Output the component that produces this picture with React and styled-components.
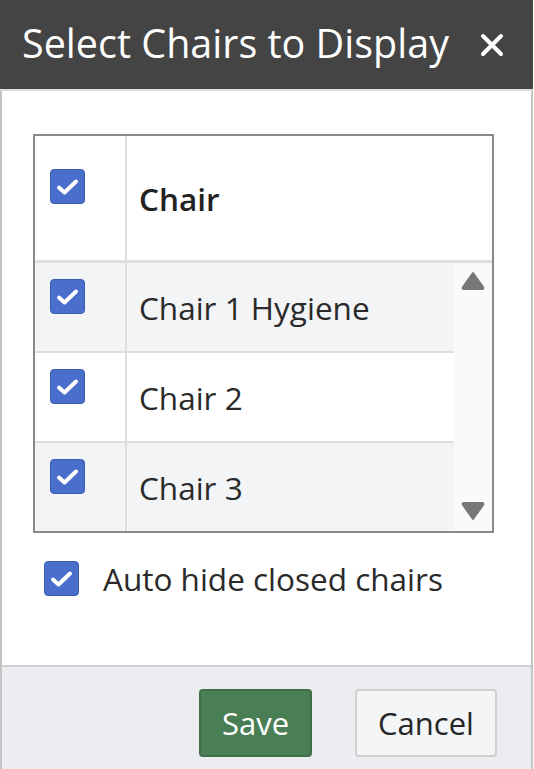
import React, { useState } from "react";
import styled, { createGlobalStyle } from "styled-components";

const GlobalStyle = createGlobalStyle`
  html, body {
    margin: 0;
    padding: 0;
    background: #ffffff;
  }
  body {
    font-family: "Open Sans", "Noto Sans", sans-serif;
    color: #262626;
  }
`;

const chairs = ["Chair 1 Hygiene", "Chair 2", "Chair 3"];

const Check = ({ checked }) => (
  <Box $checked={checked}>
    {checked && (
      <svg width="35" height="35" viewBox="0 0 35 35">
        <path
          d="M9 18.5 L14.5 23.5 L26 12.5"
          fill="none"
          stroke="#fff"
          strokeWidth="4"
          strokeLinecap="round"
          strokeLinejoin="round"
        />
      </svg>
    )}
  </Box>
);

const App = () => {
  const [checked, setChecked] = useState([true, true, true]);
  const [autoHide, setAutoHide] = useState(true);
  const all = checked.every(Boolean);

  const toggle = (i) =>
    setChecked((c) => c.map((v, j) => (j === i ? !v : v)));

  return (
    <>
      <GlobalStyle />
      <Dialog>
        <Header>
          <Title>Select Chairs to Display</Title>
          <Close aria-label="close">
            <svg width="24" height="24" viewBox="0 0 24 24">
              <path
                d="M3 3 L21 21 M21 3 L3 21"
                stroke="#fff"
                strokeWidth="4"
                strokeLinecap="round"
              />
            </svg>
          </Close>
        </Header>

        <Body>
          <Table>
            <HeadRow>
              <CheckCell
                $head
                onClick={() => setChecked(chairs.map(() => !all))}
              >
                <Check checked={all} />
              </CheckCell>
              <HeadLabel>Chair</HeadLabel>
            </HeadRow>
            <Scroller>
              <Rows>
                {chairs.map((name, i) => (
                  <Row key={name} $odd={i % 2 === 0} onClick={() => toggle(i)}>
                    <CheckCell>
                      <Check checked={checked[i]} />
                    </CheckCell>
                    <Label>{name}</Label>
                  </Row>
                ))}
              </Rows>
              <ScrollBar>
                <svg width="26" height="20" viewBox="0 0 26 20">
                  <path
                    d="M13 2 L23 16 Q24 18 22 18 L4 18 Q2 18 3 16 Z"
                    fill="#777"
                    stroke="#777"
                    strokeWidth="2"
                    strokeLinejoin="round"
                  />
                </svg>
                <svg width="26" height="20" viewBox="0 0 26 20">
                  <path
                    d="M13 18 L23 4 Q24 2 22 2 L4 2 Q2 2 3 4 Z"
                    fill="#777"
                    stroke="#777"
                    strokeWidth="2"
                    strokeLinejoin="round"
                  />
                </svg>
              </ScrollBar>
            </Scroller>
          </Table>

          <AutoHide onClick={() => setAutoHide(!autoHide)}>
            <Check checked={autoHide} />
            <span>Auto hide closed chairs</span>
          </AutoHide>
        </Body>

        <Footer>
          <Button $primary>Save</Button>
          <Button>Cancel</Button>
        </Footer>
      </Dialog>
    </>
  );
};

const Dialog = styled.div`
  width: 533px;
  height: 100vh;
  box-sizing: border-box;
  border-left: 2px solid #c4c4c4;
  border-right: 2px solid #c4c4c4;
  display: flex;
  flex-direction: column;
  background: #fff;
`;

const Header = styled.div`
  height: 89px;
  background: #444444;
  border-bottom: 2px solid #dcdcdc;
  margin: 0 -2px;
  padding: 0 29px 0 22px;
  display: flex;
  align-items: center;
  justify-content: space-between;
  flex-shrink: 0;
`;

const Title = styled.h1`
  margin: 0;
  font-size: 39.5px;
  font-weight: 400;
  color: #ffffff;
  line-height: 1;
  padding-bottom: 2px;
`;

const Close = styled.button`
  background: none;
  border: none;
  padding: 0;
  display: flex;
  cursor: pointer;
`;

const Body = styled.div`
  flex: 1;
  padding: 43px 35px 0 31px;
`;

const Table = styled.div`
  border: 2px solid #8a8a8a;
  width: 457px;
`;

const HeadRow = styled.div`
  display: flex;
  height: 124px;
  border-bottom: 3px solid #dedede;
`;

const CheckCell = styled.div`
  width: 92px;
  flex-shrink: 0;
  border-right: 2px solid #dedede;
  box-sizing: border-box;
  padding: ${(p) => (p.$head ? "33px 0 0 15px" : "16px 0 0 15px")};
  cursor: pointer;
`;

const HeadLabel = styled.div`
  flex: 1;
  display: flex;
  align-items: center;
  padding-left: 12px;
  font-size: 31.5px;
  font-weight: 600;
  color: #222;
`;

const Scroller = styled.div`
  display: flex;
`;

const Rows = styled.div`
  flex: 1;
`;

const Row = styled.div`
  display: flex;
  height: 88px;
  background: ${(p) => (p.$odd ? "#f3f4f6" : "#ffffff")};
  border-bottom: 2px solid #dedede;
  cursor: pointer;

  &:last-child {
    border-bottom: none;
  }
`;

const Label = styled.div`
  flex: 1;
  display: flex;
  align-items: center;
  padding-left: 12px;
  font-size: 31.5px;
  color: #2a2a2a;
`;

const ScrollBar = styled.div`
  width: 38px;
  background: #fafafa;
  display: flex;
  flex-direction: column;
  justify-content: space-between;
  align-items: center;
  padding: 8px 0 10px;
  box-sizing: border-box;
`;

const Box = styled.span`
  width: 35px;
  height: 35px;
  box-sizing: border-box;
  border-radius: 4px;
  border: 1px solid ${(p) => (p.$checked ? "#3a5cb5" : "#999")};
  background: ${(p) => (p.$checked ? "#4a6ecb" : "#fff")};
  display: flex;
  align-items: center;
  justify-content: center;
  flex-shrink: 0;
  overflow: hidden;

  svg {
    flex-shrink: 0;
  }
`;

const AutoHide = styled.label`
  display: flex;
  align-items: center;
  gap: 24px;
  margin: 24px 0 0 11px;
  font-size: 31.5px;
  color: #2a2a2a;
  cursor: pointer;
`;

const Footer = styled.div`
  height: 104px;
  flex-shrink: 0;
  background: #ecedf1;
  border-top: 2px solid #cfcfcf;
  box-sizing: border-box;
  display: flex;
  justify-content: flex-end;
  align-items: flex-start;
  gap: 43px;
  padding: 22px 34px 0 0;
`;

const Button = styled.button`
  height: 68px;
  padding: 0 20px;
  min-width: ${(p) => (p.$primary ? "113px" : "142px")};
  font-family: "Open Sans", "Noto Sans", sans-serif;
  font-size: 31px;
  border-radius: 4px;
  cursor: pointer;
  color: ${(p) => (p.$primary ? "#ffffff" : "#262626")};
  background: ${(p) => (p.$primary ? "#4a7f55" : "#f4f5f7")};
  border: 2px solid ${(p) => (p.$primary ? "#3f6e49" : "#cfcfcf")};
`;

export default App;
